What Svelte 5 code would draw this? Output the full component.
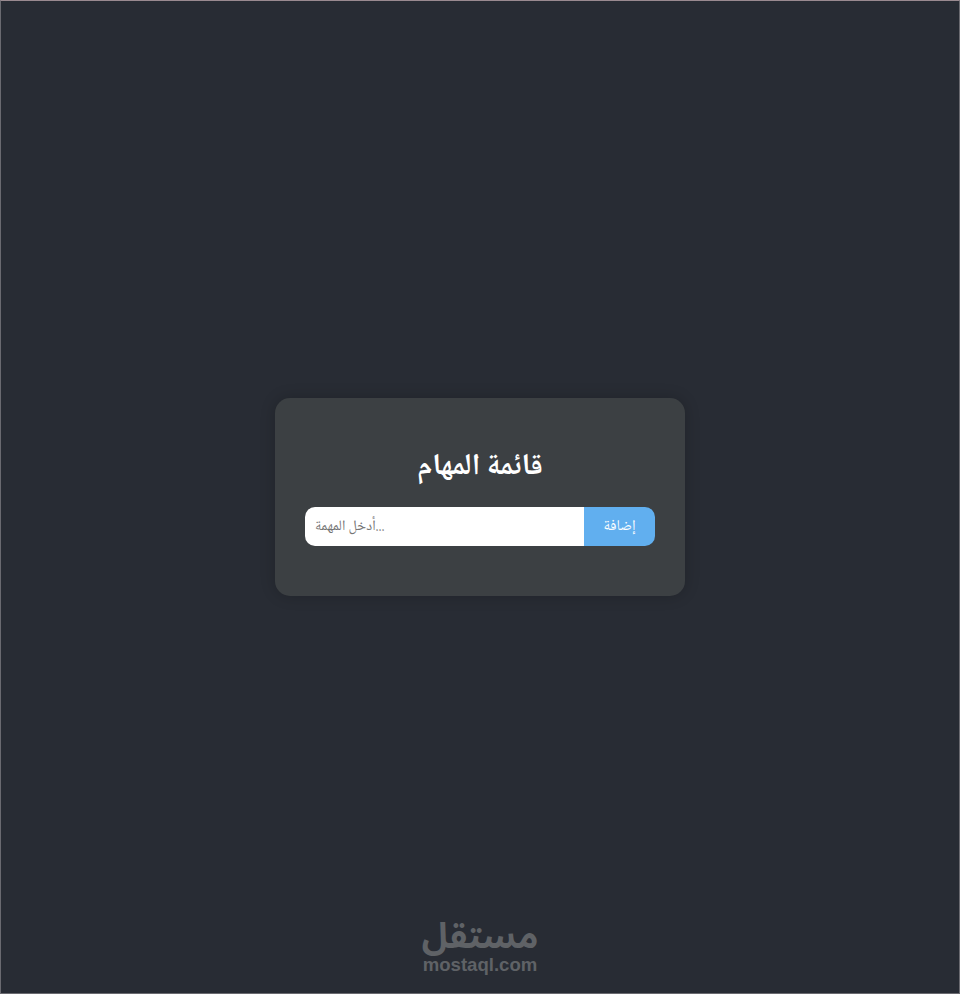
<script>
	let task = $state('');
</script>

<main class="page">
	<section class="card">
		<h1 class="title">قائمة المهام</h1>
		<form class="task-form" onsubmit={(e) => e.preventDefault()}>
			<input class="task-input" type="text" placeholder="أدخل المهمة..." bind:value={task} />
			<button class="task-add" type="submit">إضافة</button>
		</form>
	</section>

	<!-- watermark sits over the page -->
	<div class="mark">
		<span class="mark-ar">مستقل</span>
		<span class="mark-en">mostaql.com</span>
	</div>
</main>

<style>
	:global(body) {
		margin: 0;
		background: #282c34;
	}

	.page {
		position: relative;
		box-sizing: border-box;
		height: 994px;
		display: flex;
		align-items: center;
		justify-content: center;
		background: #282c34;
		border: 1px solid #6a6a70;
		border-top-color: #9a8a90;
		font-family: 'Noto Naskh Arabic', 'DejaVu Sans', serif;
	}

	.card {
		box-sizing: border-box;
		width: 410px;
		height: 198px;
		padding: 50px 30px 30px;
		background: #3c4043;
		border-radius: 15px;
		box-shadow: 0 0 15px rgba(0, 0, 0, 0.2);
	}

	.title {
		margin: 0 0 20px;
		color: #fff;
		font-size: 30px;
		font-weight: 700;
		line-height: 39px;
		text-align: center;
	}

	.task-form {
		display: flex;
		height: 39px;
	}

	.task-input {
		flex: 1;
		min-width: 0;
		box-sizing: border-box;
		padding: 0 10px;
		border: none;
		border-radius: 10px 0 0 10px;
		outline: none;
		background: #fff;
		font: 14.4px 'Noto Naskh Arabic', 'DejaVu Sans', serif;
	}

	.task-input::placeholder {
		color: #757575;
	}

	.task-add {
		width: 71px;
		border: none;
		border-radius: 0 10px 10px 0;
		background: #61afef;
		color: #fff;
		font: 15px 'Noto Naskh Arabic', 'DejaVu Sans', serif;
	}

	.mark {
		position: absolute;
		left: 0;
		right: 0;
		bottom: 20px;
		display: flex;
		flex-direction: column;
		align-items: center;
		gap: 2px;
		color: #5f6266;
		font-weight: 700;
	}

	.mark-ar {
		font-family: 'Noto Sans Arabic', 'DejaVu Sans', sans-serif;
		font-size: 35px;
		line-height: 34px;
	}

	.mark-en {
		font-family: 'Liberation Sans', sans-serif;
		font-size: 18.6px;
		line-height: 17px;
	}
</style>
